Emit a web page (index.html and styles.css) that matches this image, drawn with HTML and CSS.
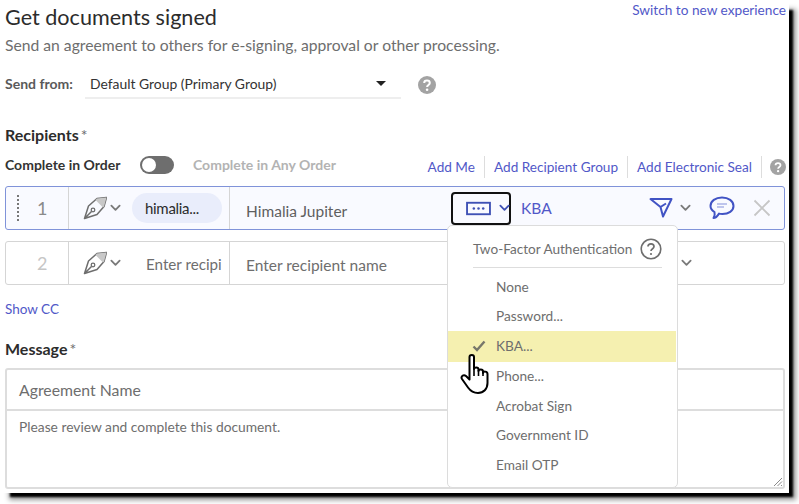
FILE: index.html
```html
<!DOCTYPE html>
<html lang="en">
<head>
<meta charset="utf-8">
<title>Get documents signed</title>
<link rel="stylesheet" href="styles.css">
</head>
<body>
<svg class="defs" width="0" height="0" aria-hidden="true">
  <symbol id="pen" viewBox="0 0 24 24">
    <path d="M23.5 1.5 L14 2.5 L5.5 10 L1.5 22.5 L14 18.5 L21 10.5 Z M1.5 22.5 L8.5 15.5" fill="none" stroke="#6e6e6e" stroke-width="1.5" stroke-linejoin="round"/>
    <path d="M23.5 1.5 L14 2.5 L12.5 4 L20 11.5 L21 10.5 Z" fill="#c8c8c8"/>
    <circle cx="10" cy="14" r="1.8" fill="none" stroke="#6e6e6e" stroke-width="1.3"/>
  </symbol>
  <symbol id="chev" viewBox="0 0 12 8">
    <path d="M1.5 1.5 L6 6 L10.5 1.5" fill="none" stroke="currentColor" stroke-width="2" stroke-linecap="round" stroke-linejoin="round"/>
  </symbol>
  <symbol id="helpfill" viewBox="0 0 18 18">
    <circle cx="9" cy="9" r="9" fill="#a3a3a3"/>
    <path d="M6.2 7 C6.2 3.8 11.8 3.8 11.8 7 C11.8 9 9.1 9 9.1 11" fill="none" stroke="#fff" stroke-width="2"/>
    <circle cx="9.1" cy="13.7" r="1.3" fill="#fff"/>
  </symbol>
</svg>
<main class="page">
  <header class="top">
    <h1 class="title">Get documents signed</h1>
    <a class="link switch">Switch to new experience</a>
  </header>
  <p class="sub">Send an agreement to others for e-signing, approval or other processing.</p>
  <div class="from">
    <span class="from-label">Send from:</span>
    <div class="select">
      <span>Default Group (Primary Group)</span>
      <i class="caret"></i>
    </div>
    <svg class="help-from"><use href="#helpfill"/></svg>
  </div>
  <h2 class="section recip">Recipients<span class="star">*</span></h2>
  <div class="order">
    <span class="ord-on">Complete in Order</span>
    <span class="toggle"><i class="knob"></i></span>
    <span class="ord-off">Complete in Any Order</span>
    <nav class="actions">
      <a class="link act">Add Me</a>
      <a class="link act">Add Recipient Group</a>
      <a class="link act">Add Electronic Seal</a>
      <svg class="help-act"><use href="#helpfill"/></svg>
    </nav>
  </div>
  <div class="row active">
    <div class="num"><i class="grip"></i><span>1</span></div>
    <div class="role">
      <svg class="pen"><use href="#pen"/></svg>
      <svg class="chev"><use href="#chev"/></svg>
      <span class="pill">himalia...</span>
    </div>
    <div class="name dark">Himalia Jupiter</div>
    <div class="auth">
      <span class="focus">
        <svg class="pw" viewBox="0 0 24 14"><rect x="1" y="1.5" width="22" height="11" fill="none" stroke="#3f51b5" stroke-width="1.8"/><circle cx="7.5" cy="7" r="1.2" fill="#3f51b5"/><circle cx="12" cy="7" r="1.2" fill="#3f51b5"/><circle cx="16.5" cy="7" r="1.2" fill="#3f51b5"/></svg>
        <svg class="chev blue"><use href="#chev"/></svg>
      </span>
      <span class="kba">KBA</span>
      <svg class="plane" viewBox="0 0 24 22"><path d="M1.5 2 H22.5 L14 19.5 L11.5 10 Z M11.5 10 L17 6.5" fill="none" stroke="#4153c4" stroke-width="2" stroke-linejoin="round"/></svg>
      <svg class="chev grey"><use href="#chev"/></svg>
      <svg class="bubble" viewBox="0 0 26 24"><path d="M13 1.5 C19.5 1.5 24.5 5 24.5 10 C24.5 15 19.5 18 13.5 18 C12 18 11 18 10 17.6 C8.5 20 6.5 22 4.5 22 C5.8 20 6 18 5.5 16 C3 14.5 1.5 12.5 1.5 10 C1.5 5 6.5 1.5 13 1.5 Z" fill="none" stroke="#4153c4" stroke-width="2" stroke-linejoin="round"/><path d="M8 8 H18 M8 11 H15" stroke="#aab4e8" stroke-width="1.6"/></svg>
      <svg class="close" viewBox="0 0 18 18"><path d="M1.5 1.5 L16.5 16.5 M16.5 1.5 L1.5 16.5" stroke="#c6c6c6" stroke-width="1.8"/></svg>
    </div>
  </div>
  <div class="row second">
    <div class="num light"><span>2</span></div>
    <div class="role">
      <svg class="pen"><use href="#pen"/></svg>
      <svg class="chev"><use href="#chev"/></svg>
      <span class="enter">Enter recipi</span>
    </div>
    <div class="name">Enter recipient name</div>
    <div class="auth end"><svg class="chev grey"><use href="#chev"/></svg></div>
  </div>
  <a class="link cc">Show CC</a>
  <h2 class="section msg">Message<span class="star">*</span></h2>
  <div class="msgbox">
    <div class="agr">Agreement Name</div>
    <div class="body">Please review and complete this document.</div>
    <svg class="resize" viewBox="0 0 10 10"><path d="M1 9 L9 1 M4.5 9 L9 4.5 M8 9 L9 8" stroke="#8a8a8a" stroke-width="1"/></svg>
  </div>
  <div class="menu">
    <div class="menu-head">
      <span>Two-Factor Authentication</span>
      <svg class="help-line" viewBox="0 0 22 22"><circle cx="11" cy="11" r="9.8" fill="none" stroke="#6e6e6e" stroke-width="1.6"/><path d="M8 8.6 C8 5 14 5 14 8.6 C14 10.8 11 10.6 11 13" fill="none" stroke="#6e6e6e" stroke-width="1.7"/><circle cx="11" cy="16" r="1.1" fill="#6e6e6e"/></svg>
    </div>
    <ul class="items">
      <li>None</li>
      <li>Password...</li>
      <li class="sel"><svg class="check" viewBox="0 0 14 12"><path d="M1.5 6.5 L5 10 L12.5 1.5" fill="none" stroke="#77776a" stroke-width="2.4"/></svg>KBA...</li>
      <li>Phone...</li>
      <li>Acrobat Sign</li>
      <li>Government ID</li>
      <li>Email OTP</li>
    </ul>
  </div>
  <svg class="hand" viewBox="0 0 32 42"><path d="M9.5 4 C9.5 1.2 14 1.2 14 4 V16 C14 14 18.5 14 18.5 16.5 V18 C18.5 16 23 16 23 18.5 V20 C23 18 27.5 18 27.5 21 V30 C27.5 36 23.5 40 18 40 C13 40 10.5 38 8 34.5 L2 26 C0.5 23.5 3.5 21 6 23 L9.5 26.5 Z" fill="#fff" stroke="#000" stroke-width="2" stroke-linejoin="round"/><path d="M14 16 V23 M18.5 17 V23 M23 19 V23" stroke="#000" stroke-width="1.6"/></svg>
</main>
</body>
</html>
```
FILE: styles.css
```css
* { box-sizing: border-box; }
html, body { margin: 0; height: 100%; background: #fff; overflow: hidden; }
body { font-family: "Lato", "Open Sans", sans-serif; color: #6e6e6e; }
.defs { position: absolute; }
a { cursor: pointer; }
.page {
  position: relative;
  width: 789px;
  height: 493px;
  padding: 3px 4px 0 5px;
  background: #fff;
  box-shadow: 7px 7px 2px -3px #000, 8px 8px 5px -1px #999;
}
.link { color: #5158c8; }
.top { display: flex; justify-content: space-between; align-items: flex-start; height: 28px; }
.title { margin: 0; font-size: 21.6px; line-height: 28px; font-weight: 400; color: #2c2c2c; }
.switch { font-size: 13.65px; line-height: 16px; margin: -1px -1px 0 0; }
.sub { margin: 3px 0 0; font-size: 15.7px; line-height: 22px; }
.from { display: flex; align-items: center; height: 29px; margin-top: 14px; }
.from-label { width: 80px; margin-top: -2px; font-size: 14px; font-weight: 700; color: #5a5a5a; }
.select { display: flex; align-items: center; justify-content: space-between; width: 316px; height: 29px; padding: 0 15px 0 5px; border-bottom: 2px solid #eee; font-size: 13.9px; color: #333; }
.caret { width: 0; height: 0; border: 5px solid transparent; border-top-color: #222; border-bottom: 0; }
.help-from { width: 18px; height: 18px; margin-left: 17px; }
.section { margin: 0; font-size: 16px; line-height: 22px; font-weight: 700; color: #2c2c2c; }
.star { margin-left: 2px; font-weight: 400; color: #6e6e6e; }
.recip { margin-top: 25px; }
.msg { margin-top: 19px; }
.order { display: flex; align-items: center; height: 24px; margin-top: 7px; font-size: 14px; font-weight: 700; }
.ord-on { color: #333; width: 135px; margin-top: -2px; }
.ord-off { color: #b3b3b3; margin-left: 19px; margin-top: -2px; }
.toggle { display: flex; align-items: center; width: 34px; height: 18px; padding-left: 2px; border-radius: 9px; background: #6e6e6e; }
.knob { width: 14px; height: 14px; border-radius: 50%; background: #fff; }
.actions { display: flex; align-items: center; margin-left: auto; margin-top: 4px; height: 22px; font-weight: 400; }
.act { padding: 0 9px; line-height: 22px; border-right: 1px solid #ddd; font-size: 13.6px; }
.help-act { width: 16px; height: 16px; margin-left: 8px; margin-right: -1px; }
.row { display: flex; height: 44px; margin-top: 9px; border: 1px solid #d5d5d5; border-radius: 3px; font-size: 15.5px; }
.row.active { border-color: #8093d9; background: #f9faff; }
.row.second { margin-top: 11px; }
.num { display: flex; align-items: center; flex: none; width: 63px; border-right: 1px solid #d5d5d5; font-size: 18px; color: #8a8a8a; }
.num span { margin-left: 31px; }
.num.light { color: #c6c6c6; }
.grip { width: 2px; height: 26px; margin-left: 11px; margin-right: -13px; border-left: 2px dotted #777; }
.role { display: flex; align-items: center; flex: none; width: 161px; padding-left: 14px; border-right: 1px solid #d5d5d5; overflow: hidden; }
.pen { width: 24px; height: 24px; flex: none; }
.chev { width: 11px; height: 8px; flex: none; color: #7a7a7a; }
.role .chev { margin-left: 3px; }
.pill { display: flex; align-items: center; flex: none; width: 90px; height: 30px; margin-left: 11px; padding-left: 13px; border-radius: 15px; background: #e9edfb; color: #2c2c2c; font-size: 15px; letter-spacing: -0.3px; }
.enter { flex: none; margin-left: 25px; font-size: 15.2px; white-space: nowrap; margin-top: 1px; }
.name { display: flex; align-items: center; flex: none; width: 217px; padding-left: 16px; }
.name.dark { color: #5f5f5f; padding-top: 5px; }
.second .name { padding-top: 3px; color: #6e6e6e; }
.auth { display: flex; align-items: center; flex: 1; min-width: 0; }
.auth.end { justify-content: flex-end; padding-right: 92px; }
.focus { display: flex; align-items: center; width: 60px; height: 33px; margin-left: 4px; padding-left: 13px; border: 2px solid #111; border-radius: 4px; }
.pw { width: 25px; height: 15px; flex: none; }
.blue { color: #3f51b5; margin-left: 8px; }
.kba { margin-left: 10px; color: #5158c8; }
.plane { width: 24px; height: 22px; margin-left: 97px; flex: none; }
.grey { color: #7a7a7a; margin-left: 7px; }
.bubble { width: 26px; height: 24px; margin-left: 18px; flex: none; }
.close { width: 18px; height: 18px; margin-left: 18px; flex: none; }
.cc { display: block; margin-top: 14px; font-size: 13.5px; line-height: 20px; }
.msgbox { position: relative; height: 121px; margin-top: 8px; border: 2px solid #ddd; border-radius: 3px; }
.agr { height: 41px; padding: 0 12px; border-bottom: 2px solid #ddd; font-size: 15.8px; line-height: 39px; }
.body { padding: 6px 12px; font-size: 13.8px; line-height: 20px; }
.resize { position: absolute; right: 0; bottom: 0; width: 10px; height: 10px; }
.menu { position: absolute; left: 447px; top: 225px; width: 231px; height: 263px; background: #fff; border: 1px solid #dcdcdc; border-radius: 5px; }
.menu-head { display: flex; align-items: center; justify-content: space-between; width: 189px; height: 42px; margin: 0 0 0 25px; padding-top: 4px; border-bottom: 1px solid #ddd; font-size: 13.6px; color: #6e6e6e; }
.help-line { width: 22px; height: 22px; }
.items { list-style: none; margin: 4px 0 0; padding: 0 1px 0 0; font-size: 13.65px; }
.items li { display: flex; align-items: center; position: relative; height: 29.4px; padding-left: 48px; color: #6e6e6e; }
.items .sel { height: 31px; background: #f5f0b0; }
.check { position: absolute; left: 24px; top: 9px; width: 14px; height: 12px; }
.hand { position: absolute; left: 460px; top: 353px; width: 32px; height: 42px; }
```
